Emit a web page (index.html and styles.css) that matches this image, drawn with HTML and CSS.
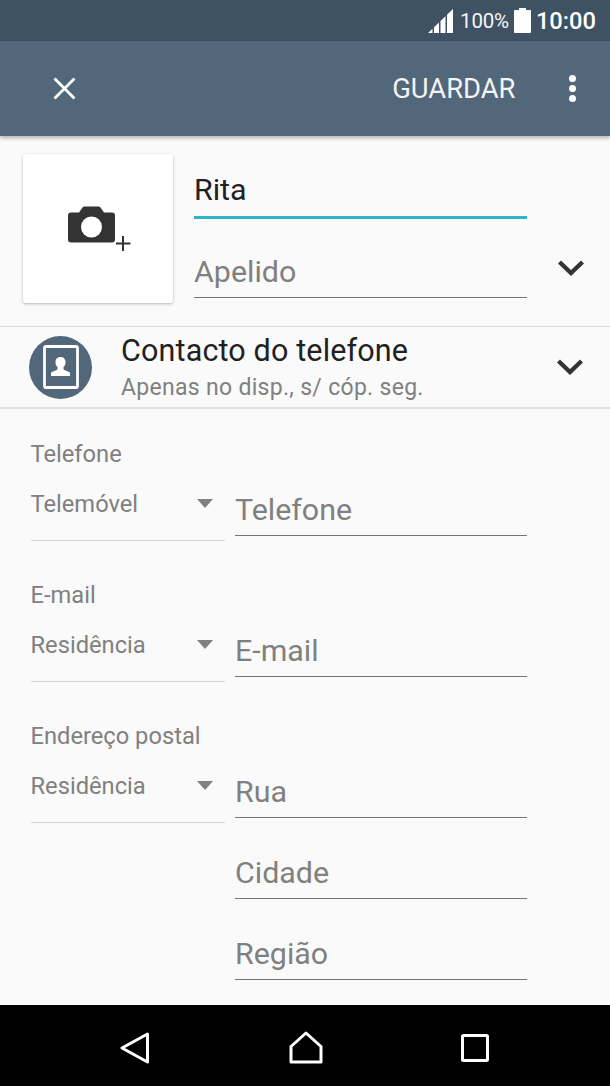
FILE: index.html
```html
<!DOCTYPE html>
<html lang="pt">
<head>
<meta charset="utf-8">
<title>Contacto</title>
<link rel="stylesheet" href="styles.css">
</head>
<body>
<div class="screen">
  <header class="statusbar">
    <svg class="signal" width="25" height="24" viewBox="0 0 25 24"><path d="M0 24 4.500 19.700V24z M6 18.200 11 13.400V24H6z M12.500 12 17.500 7.200V24h-5z M19 5.800 25 0V24h-6z" fill="#fff"/></svg>
    <span class="battery-text">100%</span>
    <svg class="battery" width="17" height="25" viewBox="0 0 17 25"><path d="M5 0h7v2h4a1 1 0 0 1 1 1v21a1 1 0 0 1-1 1H1a1 1 0 0 1-1-1V3a1 1 0 0 1 1-1h4z" fill="#fff"/></svg>
    <span class="clock">10:00</span>
  </header>
  <div class="appbar">
    <svg class="close" width="23" height="23" viewBox="0 0 23 23"><path d="M1.500 1.500l20 20M21.500 1.500l-20 20" stroke="#fff" stroke-width="2.800" fill="none"/></svg>
    <span class="save">GUARDAR</span>
    <div class="dots"><i></i><i></i><i></i></div>
  </div>
  <main class="content">
    <section class="name-row">
      <div class="photo">
        <svg width="66" height="46" viewBox="0 0 66 46"><path d="M11 6.500 14.500 1.500a3 3 0 0 1 2-1h14a3 3 0 0 1 2 1l3.500 5h8a3 3 0 0 1 3 3v24a3 3 0 0 1-3 3H3a3 3 0 0 1-3-3v-24a3 3 0 0 1 3-3z" fill="#333"/><circle cx="23.500" cy="21" r="10.500" fill="#fff"/><path d="M55 30v15M48 37.500h14.500" stroke="#333" stroke-width="2" fill="none"/></svg>
      </div>
      <div class="name-fields">
        <div class="field field-active"><span class="value">Rita</span></div>
        <div class="field field-last"><span class="hint">Apelido</span></div>
      </div>
      <svg class="chevron chevron-name" width="28" height="18" viewBox="0 0 28 18"><path d="M2.500 3 14 14 25.500 3" stroke="#333" stroke-width="4.300" fill="none"/></svg>
    </section>
    <section class="account">
      <div class="avatar">
        <svg width="36" height="44" viewBox="0 0 36 44"><rect x="1.500" y="1.500" width="33" height="41" rx="1.500" stroke="#fff" stroke-width="2.800" fill="none"/><path d="M8 31v-3.500l6.500-3v-2.500c-1.500-1-2-3-2-5 0-3 2-5 5-5s5 2 5 5c0 2-.5 4-2 5v2.500l6.500 3V31z" fill="#fff"/></svg>
      </div>
      <div class="account-text">
        <div class="account-title">Contacto do telefone</div>
        <div class="account-sub">Apenas no disp., s/ cóp. seg.</div>
      </div>
      <svg class="chevron" width="28" height="18" viewBox="0 0 28 18"><path d="M2.500 3 14 14 25.500 3" stroke="#333" stroke-width="4.300" fill="none"/></svg>
    </section>
    <section class="group">
      <div class="group-label">Telefone</div>
      <div class="group-row">
        <div class="select"><span>Telemóvel</span><i class="caret"></i></div>
        <div class="inputs"><div class="field"><span class="hint">Telefone</span></div></div>
      </div>
    </section>
    <section class="group">
      <div class="group-label">E-mail</div>
      <div class="group-row">
        <div class="select"><span>Residência</span><i class="caret"></i></div>
        <div class="inputs"><div class="field"><span class="hint">E-mail</span></div></div>
      </div>
    </section>
    <section class="group">
      <div class="group-label">Endereço postal</div>
      <div class="group-row">
        <div class="select"><span>Residência</span><i class="caret"></i></div>
        <div class="inputs">
          <div class="field"><span class="hint">Rua</span></div>
          <div class="field"><span class="hint">Cidade</span></div>
          <div class="field"><span class="hint">Região</span></div>
        </div>
      </div>
    </section>
  </main>
  <nav class="navbar">
    <svg width="30" height="32" viewBox="0 0 30 32"><path d="M27.500 2 2 16l25.500 14z" stroke="#fff" stroke-width="3" stroke-linejoin="round" fill="none"/></svg>
    <svg width="34" height="33" viewBox="0 0 34 33"><path d="M17 2 32 15.500v15.500H2V15.500z" stroke="#fff" stroke-width="3" stroke-linejoin="round" fill="none"/></svg>
    <svg width="28" height="28" viewBox="0 0 28 28"><rect x="1.500" y="1.500" width="25" height="25" rx="1" stroke="#fff" stroke-width="3" fill="none"/></svg>
  </nav>
</div>
</body>
</html>
```
FILE: styles.css
```css
* { box-sizing: border-box; }
html, body { margin: 0; padding: 0; }
body { font-family: Roboto, "Liberation Sans", sans-serif; background: #fafafa; }
.screen { width: 610px; height: 1086px; display: flex; flex-direction: column; overflow: hidden; background: #fafafa; }

.statusbar { height: 41px; flex: none; background: #3f5263; display: flex; align-items: center; padding: 0 14px 0 0; justify-content: flex-end; color: #fff; }
.signal { margin-right: 7px; margin-top: 1px; }
.battery-text { font-size: 20.500px; letter-spacing: -.2px; opacity: .95; margin-right: 5px; }
.battery { margin-right: 5px; margin-top: -1px; }
.clock { font-size: 23.700px; font-weight: 500; }

.appbar { height: 95px; flex: none; background: #526779; display: flex; align-items: center; padding: 0 34px 0 53px; color: #fff; box-shadow: 0 2px 4px rgba(0,0,0,.3); position: relative; z-index: 1; }
.close { flex: none; }
.save { margin-left: auto; font-size: 27.400px; margin-right: 53px; color: #f2f4f6; }
.dots { display: flex; flex-direction: column; gap: 2.500px; }
.dots i { display: block; width: 7.500px; height: 7.500px; border-radius: 50%; background: #fff; }

.content { flex: 1; min-height: 0; }

.name-row { height: 191px; display: flex; padding: 18px 0 0 23px; border-bottom: 1px solid #d9d9d9; }
.photo { width: 150px; height: 149px; background: #fff; border-radius: 3px; box-shadow: 0 1px 3px rgba(0,0,0,.28); display: flex; align-items: center; justify-content: center; padding: 0 0 0 6px; flex: none; }
.name-fields { width: 333px; margin-left: 21px; flex: none; }
.field { height: 81px; border-bottom: 1.500px solid #757575; display: flex; align-items: flex-end; padding-bottom: 8px; }
.field-active { height: 65px; border-bottom: 3px solid #2bb8c2; padding-bottom: 9px; }
.field-last { height: 79px; }
.value { font-size: 30.400px; color: #212121; line-height: 34px; }
.hint { font-size: 30.400px; color: #808080; line-height: 34px; }
.chevron { flex: none; }
.chevron-name { margin: 105px 0 0 30px; }

.account { height: 82px; display: flex; align-items: center; padding: 0 26px 0 29px; border-bottom: 2px solid #e3e3e3; margin-bottom: -1px; }
.avatar { width: 63px; height: 63px; border-radius: 50%; background: #526779; display: flex; align-items: center; justify-content: center; flex: none; }
.account-text { margin-left: 29px; flex: 1; }
.account-title { font-size: 30.500px; line-height: 34px; color: #212121; letter-spacing: .15px; }
.account-sub { font-size: 23px; line-height: 26px; color: #808080; margin-top: 7px; letter-spacing: .3px; }

.group { padding: 0 0 8px 30.500px; }
.group-label { font-size: 23.700px; line-height: 28px; color: #808080; padding-top: 32px; height: 60px; }
.group-row { display: flex; }
.select { width: 194.500px; height: 51px; border-bottom: 1px solid #d5d5d5; display: flex; justify-content: space-between; font-size: 23.700px; color: #808080; margin-top: 22px; line-height: 28px; padding-right: 12px; flex: none; }
.caret { width: 0; height: 0; border-left: 8px solid transparent; border-right: 8px solid transparent; border-top: 9px solid #808080; margin-top: 9px; }
.inputs { margin-left: 10px; width: 292px; flex: none; }
.inputs .field:first-child { height: 68px; }

.navbar { height: 81px; flex: none; background: #000; display: flex; align-items: center; justify-content: space-between; padding: 4px 121px 0 120px; position: relative; z-index: 1; }
```
